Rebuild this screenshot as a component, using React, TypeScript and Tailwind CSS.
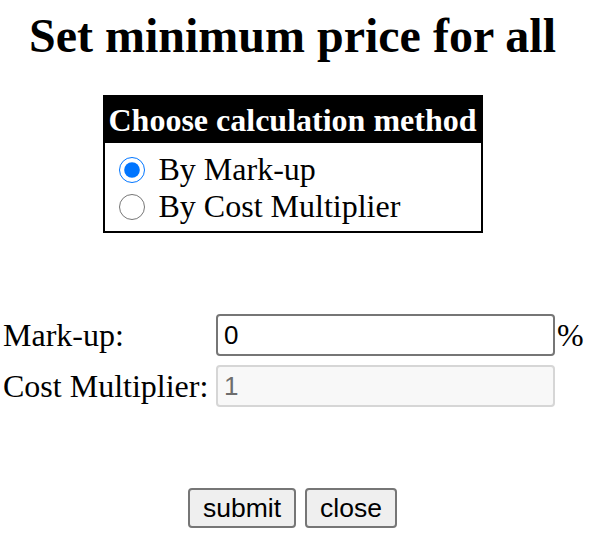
export default function App() {
  return (
    <div className="w-[585px] bg-white font-['Liberation_Serif',serif] text-black">
      <h2 className="pt-[8px] text-center text-[48px] font-bold leading-[55px]">
        Set minimum price for all
      </h2>

      {/* calculation method */}
      <div className="mx-auto mt-[32px] w-[380px] border-2 border-black">
        <div className="flex h-[46px] items-center justify-center bg-black text-[32px] font-bold leading-[37px] text-white">
          Choose calculation method
        </div>
        <div className="pb-[6px] pt-[8px] text-[32px] leading-[37px]">
          <label className="flex h-[37px] items-center">
            <input
              type="radio"
              name="method"
              defaultChecked
              className="ml-[14px] mr-[14px] h-[26px] w-[26px]"
            />
            By Mark-up
          </label>
          <label className="flex h-[37px] items-center">
            <input
              type="radio"
              name="method"
              className="ml-[14px] mr-[14px] h-[26px] w-[26px]"
            />
            By Cost Multiplier
          </label>
        </div>
      </div>

      {/* values */}
      <div className="mt-[81px] grid grid-cols-[216px_339px_auto] items-center gap-y-[9px] text-[32px] leading-[37px]">
        <span className="pl-[3px]">Mark-up:</span>
        <input
          defaultValue="0"
          className="h-[42px] w-[339px] rounded-[4px] border-2 border-[#767676] px-[6px] font-['Liberation_Sans',sans-serif] text-[26px] leading-normal"
        />
        <span className="pl-[2px]">%</span>
        <span className="pl-[3px]">Cost Multiplier:</span>
        <input
          defaultValue="1"
          disabled
          className="h-[42px] w-[339px] rounded-[4px] border-2 border-[#d6d6d6] bg-[#f8f8f8] px-[6px] font-['Liberation_Sans',sans-serif] text-[26px] leading-normal text-[#6d6d6d]"
        />
        <span />
      </div>

      <div className="mt-[81px] flex justify-center gap-[9px] font-['Liberation_Sans',sans-serif] text-[26.5px]">
        <button className="h-[40px] rounded-[4px] border-2 border-[#767676] bg-[#efefef] px-[13px] leading-none">
          submit
        </button>
        <button className="h-[40px] rounded-[4px] border-2 border-[#767676] bg-[#efefef] px-[13px] leading-none">
          close
        </button>
      </div>
    </div>
  );
}
